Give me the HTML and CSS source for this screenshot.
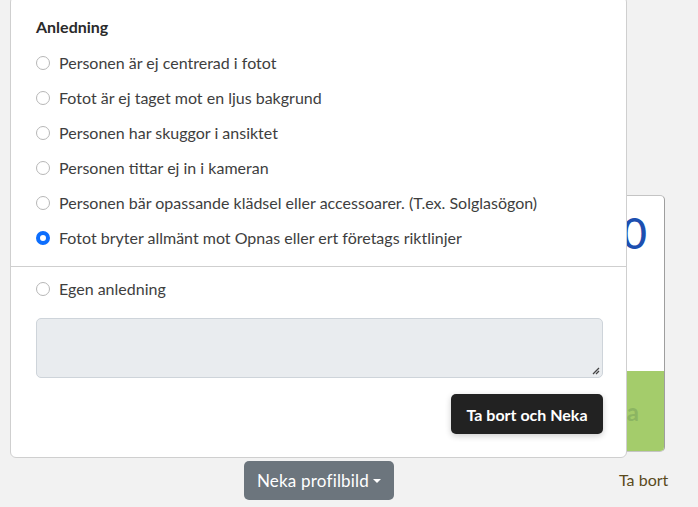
FILE: index.html
```html
<!DOCTYPE html>
<html lang="sv">
<head>
<meta charset="utf-8">
<title>Neka profilbild</title>
<link rel="stylesheet" href="styles.css">
</head>
<body>
<div class="page">
  <div class="card">
    <div class="card-top"><span class="score">0</span></div>
    <div class="card-bottom"><span class="card-btn-text">Ja</span></div>
  </div>
  <div class="actions">
    <button class="btn-deny" type="button">Neka profilbild <span class="caret"></span></button>
    <a class="link-remove" href="#">Ta bort</a>
  </div>

  <div class="popover">
    <div class="section">
      <div class="heading">Anledning</div>
      <label class="option"><span class="radio"></span>Personen är ej centrerad i fotot</label>
      <label class="option"><span class="radio"></span>Fotot är ej taget mot en ljus bakgrund</label>
      <label class="option"><span class="radio"></span>Personen har skuggor i ansiktet</label>
      <label class="option"><span class="radio"></span>Personen tittar ej in i kameran</label>
      <label class="option"><span class="radio"></span>Personen bär opassande klädsel eller accessoarer. (T.ex. Solglasögon)</label>
      <label class="option"><span class="radio checked"></span>Fotot bryter allmänt mot Opnas eller ert företags riktlinjer</label>
    </div>
    <div class="divider"></div>
    <div class="section section-own">
      <label class="option"><span class="radio"></span>Egen anledning</label>
      <div class="textarea"><svg class="grip" width="8" height="8" viewBox="0 0 8 8"><path d="M7 1 L1 7 M7 4 L4 7" stroke="#444" stroke-width="1.3" fill="none"/></svg></div>
      <div class="footer"><button class="btn-dark" type="button">Ta bort och Neka</button></div>
    </div>
  </div>
</div>
</body>
</html>
```
FILE: styles.css
```css
html, body {
  margin: 0;
  padding: 0;
}
body {
  background: #f2f2f2;
  font-family: "Lato", "Noto Sans", sans-serif;
  color: #3b3b3b;
  width: 698px;
  height: 507px;
  overflow: hidden;
}
.page {
  position: relative;
  width: 698px;
  height: 507px;
  padding-top: 195px;
  box-sizing: border-box;
}
.card {
  margin-left: 380px;
  width: 285px;
  height: 257px;
  box-sizing: border-box;
  background: #fff;
  border: 1px solid #c4c4c4;
  border-right-color: #9e9e9e;
  border-radius: 5px;
  overflow: hidden;
  display: flex;
  flex-direction: column;
}
.card-top {
  height: 175px;
  display: flex;
  justify-content: flex-end;
  padding-right: 17px;
}
.score {
  font-size: 43px;
  color: #1d4fb0;
  line-height: 1;
  margin-top: 15px;
  font-weight: 500;
}
.card-bottom {
  flex: 1;
  background: #a4cc6b;
  display: flex;
  align-items: center;
  justify-content: flex-end;
  padding-right: 25px;
}
.card-btn-text {
  font-size: 24px;
  font-weight: 700;
  color: #8cb562;
}
.actions {
  display: flex;
  align-items: flex-start;
  margin-top: 9px;
  padding-left: 244px;
}
.btn-deny {
  width: 150px;
  height: 39px;
  background: #6c757d;
  color: #fff;
  border: 0;
  border-radius: 5px;
  font-family: inherit;
  font-size: 17px;
  letter-spacing: 0.2px;
  padding: 0;
  display: flex;
  align-items: center;
  justify-content: center;
  gap: 4px;
}
.caret {
  width: 0;
  height: 0;
  border-left: 4px solid transparent;
  border-right: 4px solid transparent;
  border-top: 4px solid #fff;
  margin-top: 1px;
}
.link-remove {
  margin-left: 225px;
  margin-top: 9px;
  color: #5a4a1c;
  text-decoration: none;
  font-size: 16px;
}
.popover {
  position: absolute;
  left: 10px;
  top: -4px;
  width: 617px;
  height: 462px;
  box-sizing: border-box;
  background: #fff;
  border: 1px solid #cfcfcf;
  border-radius: 6px;
}
.section {
  padding: 18px 23px 11px 25px;
}
.heading {
  font-size: 16px;
  font-weight: 700;
  color: #2a2a2a;
  height: 24px;
  line-height: 24px;
  margin-bottom: 6px;
}
.option {
  display: flex;
  align-items: center;
  height: 35px;
  font-size: 16px;
  color: #3e3e3e;
}
.radio {
  width: 14px;
  height: 14px;
  box-sizing: border-box;
  border: 1px solid #b7b7b7;
  border-radius: 50%;
  margin-right: 9px;
  flex: none;
}
.radio.checked {
  border: 4px solid #0d6efd;
  background: #fff;
}
.divider {
  height: 1px;
  background: #cfcfcf;
}
.section-own {
  padding-top: 4px;
  padding-bottom: 0;
}
.textarea {
  margin-top: 12px;
  height: 60px;
  box-sizing: border-box;
  background: #e9ecef;
  border: 1px solid #ced4da;
  border-radius: 5px;
  position: relative;
}
.grip {
  position: absolute;
  right: 2px;
  bottom: 2px;
}
.footer {
  display: flex;
  justify-content: flex-end;
  margin-top: 16px;
}
.btn-dark {
  width: 152px;
  height: 40px;
  background: #222222;
  color: #fff;
  border: 0;
  border-radius: 5px;
  font-family: inherit;
  font-size: 16px;
  font-weight: 700;
  box-shadow: 0 2px 6px rgba(0,0,0,0.2);
}
```
